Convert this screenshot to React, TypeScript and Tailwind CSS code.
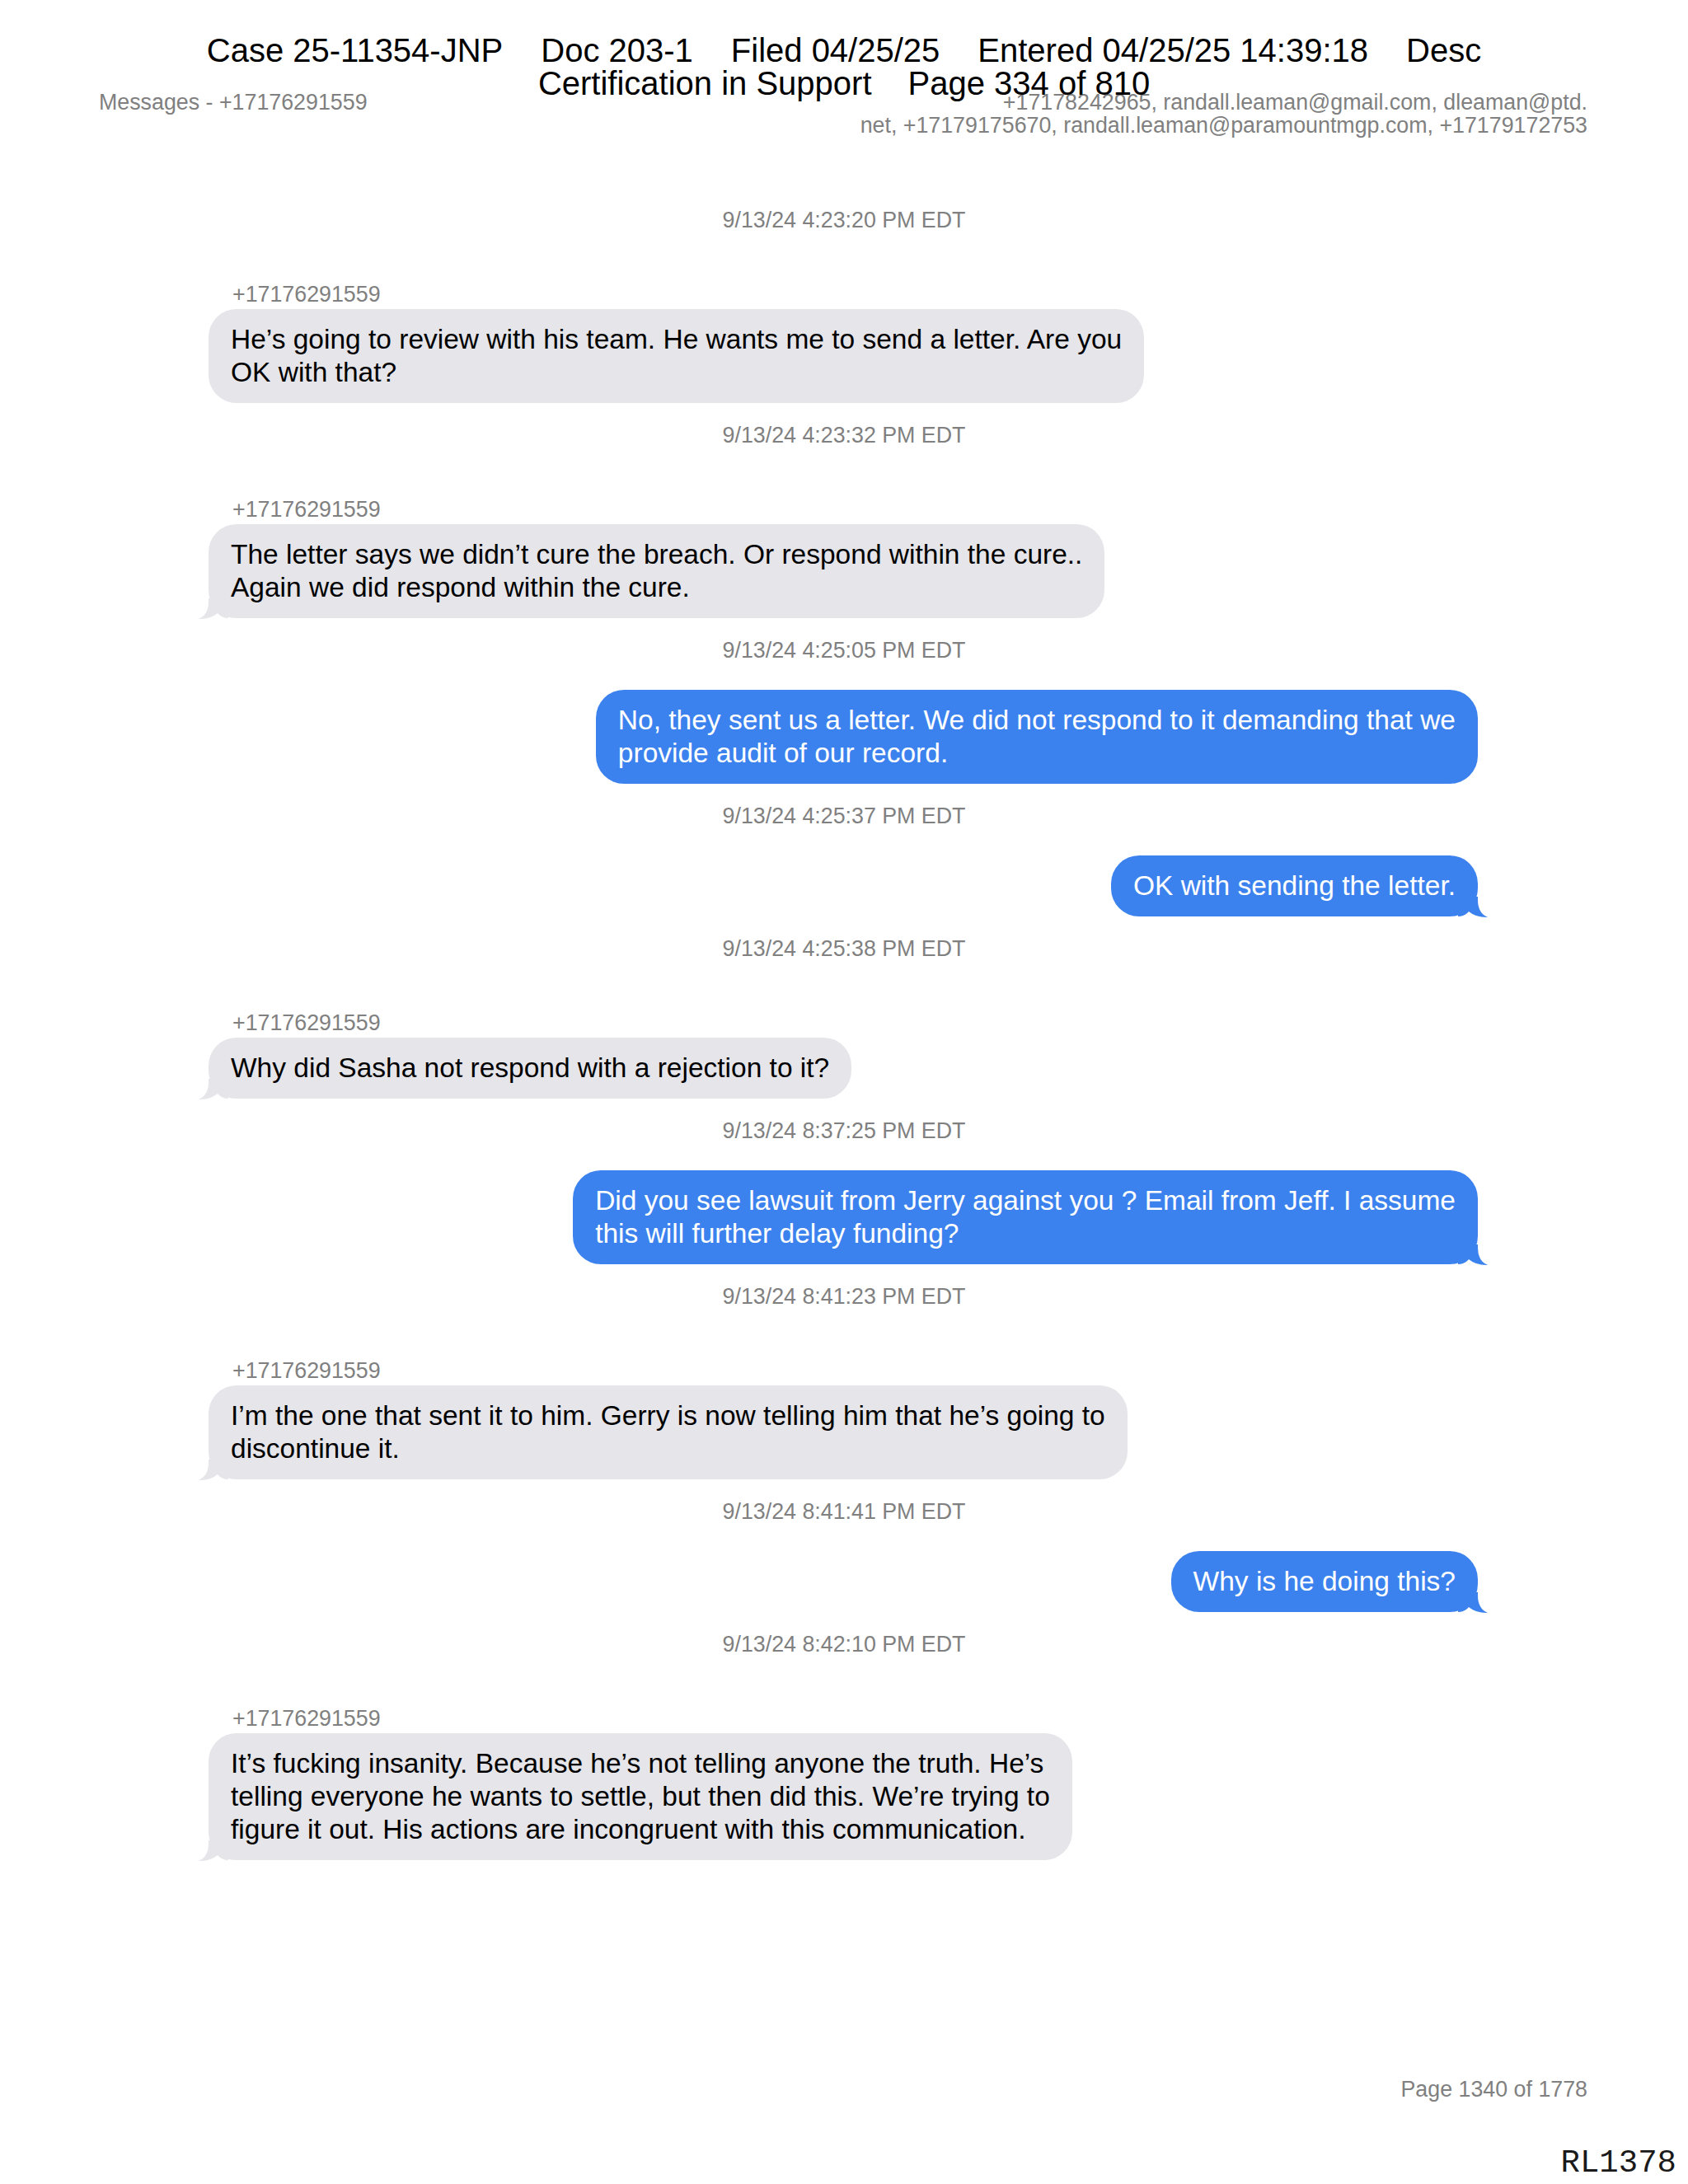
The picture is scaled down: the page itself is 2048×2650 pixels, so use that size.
import React from "react";

type Msg =
  | { kind: "time"; text: string }
  | { kind: "in"; lines: string[]; tail?: boolean }
  | { kind: "out"; lines: string[]; tail?: boolean };

const SENDER = "+17176291559";

const thread: Msg[] = [
  { kind: "time", text: "9/13/24 4:23:20 PM EDT" },
  {
    kind: "in",
    lines: ["He’s going to review with his team. He wants me to send a letter. Are you", "OK with that?"],
  },
  { kind: "time", text: "9/13/24 4:23:32 PM EDT" },
  {
    kind: "in",
    lines: ["The letter says we didn’t cure the breach. Or respond within the cure..", "Again we did respond within the cure."],
    tail: true,
  },
  { kind: "time", text: "9/13/24 4:25:05 PM EDT" },
  {
    kind: "out",
    lines: ["No, they sent us a letter. We did not respond to it demanding that we", "provide audit of our record."],
  },
  { kind: "time", text: "9/13/24 4:25:37 PM EDT" },
  { kind: "out", lines: ["OK with sending the letter."], tail: true },
  { kind: "time", text: "9/13/24 4:25:38 PM EDT" },
  { kind: "in", lines: ["Why did Sasha not respond with a rejection to it?"], tail: true },
  { kind: "time", text: "9/13/24 8:37:25 PM EDT" },
  {
    kind: "out",
    lines: ["Did you see lawsuit from Jerry against you ? Email from Jeff. I assume", "this will further delay funding?"],
    tail: true,
  },
  { kind: "time", text: "9/13/24 8:41:23 PM EDT" },
  {
    kind: "in",
    lines: ["I’m the one that sent it to him. Gerry is now telling him that he’s going to", "discontinue it."],
    tail: true,
  },
  { kind: "time", text: "9/13/24 8:41:41 PM EDT" },
  { kind: "out", lines: ["Why is he doing this?"], tail: true },
  { kind: "time", text: "9/13/24 8:42:10 PM EDT" },
  {
    kind: "in",
    lines: [
      "It’s fucking insanity. Because he’s not telling anyone the truth. He’s",
      "telling everyone he wants to settle, but then did this. We’re trying to",
      "figure it out. His actions are incongruent with this communication.",
    ],
    tail: true,
  },
];

// bubble tail, drawn for the right side; mirrored for incoming
function Tail({ color, left }: { color: string; left?: boolean }) {
  return (
    <svg
      width="36"
      height="26"
      viewBox="0 0 36 26"
      className={
        left ? "absolute bottom-[-2px] left-[-12px] -scale-x-100" : "absolute bottom-[-2px] right-[-12px]"
      }
      aria-hidden
    >
      <path d="M0 0 L24 0 L24 4 Q24 20 36 25 Q22 25.5 13 18 Q8 24 0 24 Z" fill={color} />
    </svg>
  );
}

function Bubble({ msg }: { msg: Extract<Msg, { kind: "in" | "out" }> }) {
  const incoming = msg.kind === "in";
  const color = incoming ? "#e5e5ea" : "#3c82ef";
  return (
    <div
      className={
        "relative rounded-[34px] px-[27px] py-[17px] text-[33.5px] leading-[40px] whitespace-nowrap " +
        (incoming ? "bg-[#e5e5ea] text-black" : "bg-[#3c82ef] text-white")
      }
    >
      {msg.tail && <Tail color={color} left={incoming} />}
      <div className="relative">
        {msg.lines.map((l, i) => (
          <div key={i}>{l}</div>
        ))}
      </div>
    </div>
  );
}

export default function App() {
  return (
    <div className="relative flex flex-col w-[2048px] h-[2650px] bg-white font-['Liberation_Sans',Arial,sans-serif] overflow-hidden">
      {/* Court filing stamp, printed over the page */}
      <div className="absolute top-[41px] left-0 right-0 text-black text-[40px] leading-[40px]">
        <div className="flex justify-center gap-[46px]">
          <span>Case 25-11354-JNP</span>
          <span>Doc 203-1</span>
          <span>Filed 04/25/25</span>
          <span>Entered 04/25/25 14:39:18</span>
          <span>Desc</span>
        </div>
        <div className="flex justify-center gap-[44px]">
          <span>Certification in Support</span>
          <span>Page 334 of 810</span>
        </div>
      </div>

      {/* Export header */}
      <div className="flex justify-between pt-[110px] pl-[120px] pr-[122px] text-[26.8px] leading-[28px] text-[#808080]">
        <div>Messages - {SENDER}</div>
        <div className="text-right">
          <div>+17178242965, randall.leaman@gmail.com, dleaman@ptd.</div>
          <div>net, +17179175670, randall.leaman@paramountmgp.com, +17179172753</div>
        </div>
      </div>

      {/* Thread */}
      <div className="flex flex-col mt-[86px]">
        {thread.map((m, i) => {
          const prev = thread[i - 1];
          if (m.kind === "time") {
            return (
              <div
                key={i}
                className={
                  "text-center text-[26.8px] leading-[30px] text-[#808080] " + (i === 0 ? "" : "mt-[24px]")
                }
              >
                {m.text}
              </div>
            );
          }
          if (m.kind === "in") {
            return (
              <div key={i} className="flex flex-col mt-[60px]">
                <div className="pl-[282px] text-[26.8px] leading-[30px] text-[#808080]">{SENDER}</div>
                <div className="flex pl-[253px] mt-[3px]">
                  <Bubble msg={m} />
                </div>
              </div>
            );
          }
          return (
            <div key={i} className={"flex justify-end pr-[255px] " + (prev?.kind === "time" ? "mt-[33px]" : "mt-[8px]")}>
              <Bubble msg={m} />
            </div>
          );
        })}
      </div>

      {/* Footer */}
      <div className="mt-auto flex flex-col items-end pb-[5px]">
        <div className="pr-[122px] text-[26.8px] leading-[30px] text-[#808080]">Page 1340 of 1778</div>
        <div className="mt-[55px] pr-[14px] font-['Liberation_Mono','Courier_New',monospace] text-[39px] leading-[40px] text-[#1a1a1a]">
          RL1378
        </div>
      </div>
    </div>
  );
}
